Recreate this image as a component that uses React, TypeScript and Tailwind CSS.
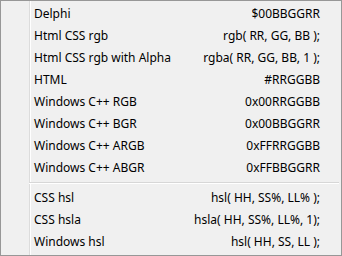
const groups: [string, string][][] = [
  [
    ["Delphi", "$00BBGGRR"],
    ["Html CSS rgb", "rgb( RR, GG, BB );"],
    ["Html CSS rgb with Alpha", "rgba( RR, GG, BB, 1 );"],
    ["HTML", "#RRGGBB"],
    ["Windows C++ RGB", "0x00RRGGBB"],
    ["Windows C++ BGR", "0x00BBGGRR"],
    ["Windows C++ ARGB", "0xFFRRGGBB"],
    ["Windows C++ ABGR", "0xFFBBGGRR"],
  ],
  [
    ["CSS hsl", "hsl( HH, SS%, LL% );"],
    ["CSS hsla", "hsla( HH, SS%, LL%, 1);"],
    ["Windows hsl", "hsl( HH, SS, LL );"],
  ],
]

function Row({ label, format }: { label: string; format: string }) {
  return (
    <div className="flex h-[22px] items-center justify-between pl-[3px] pr-[21px]">
      <span>{label}</span>
      <span>{format}</span>
    </div>
  )
}

export default function App() {
  return (
    <div className="flex h-[256px] w-[342px] border border-[#979797] bg-[#f0f0f0] font-['Noto_Sans',sans-serif] text-[12px] leading-none text-black">
      {/* icon gutter */}
      <div className="w-[29px] border-r border-[#dcdcdc]" />
      <div className="flex flex-1 flex-col border-l border-white pt-[2px]">
        {groups[0].map(([l, f]) => (
          <Row key={l} label={l} format={f} />
        ))}
        <div className="flex h-[8px] flex-col justify-center">
          <div className="-ml-[2px] mr-[2px] h-[2px] border-t border-b border-t-[#d7d7d7] border-b-white" />
        </div>
        {groups[1].map(([l, f]) => (
          <Row key={l} label={l} format={f} />
        ))}
      </div>
    </div>
  )
}
